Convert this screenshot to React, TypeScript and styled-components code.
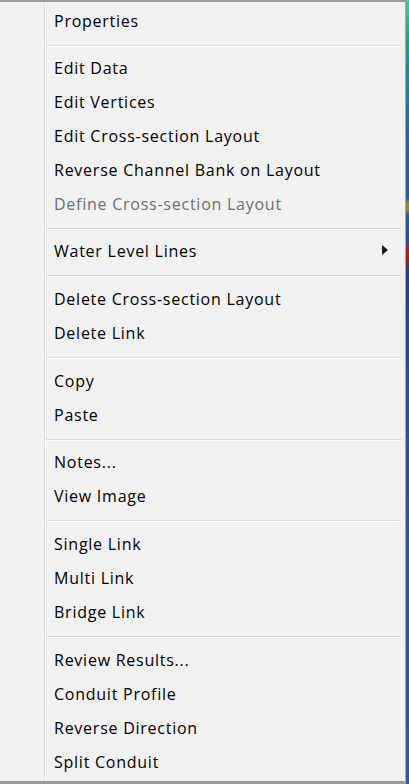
import React from "react";
import styled, { createGlobalStyle } from "styled-components";

const Global = createGlobalStyle`
  html, body { margin: 0; padding: 0; background: #f1f1f1; }
  body { font-family: "Open Sans", "Noto Sans", sans-serif; }
`;

const Screen = styled.div`
  display: flex;
  width: 409px;
  height: 784px;
  overflow: hidden;
`;

const Menu = styled.div`
  box-sizing: border-box;
  width: 406px;
  height: 784px;
  background: #f1f1f1;
  border-top: 2px solid #9a9a9a;
  border-right: 1px solid #a7a7a7;
  border-bottom: 3px solid #9a9a9a;
  padding-top: 1px;
  display: flex;
  flex-direction: column;
  position: relative;
`;

const Gutter = styled.div`
  position: absolute;
  top: 0;
  bottom: 0;
  left: 44px;
  width: 1px;
  background: #dedede;
  border-right: 1px solid #ffffff;
`;

const Strip = styled.div`
  flex: 1;
  background: linear-gradient(
    to bottom,
    #3fcf8f 0px,
    #23a07e 40px,
    #1f7f99 90px,
    #2a5d9f 150px,
    #2b5a9c 198px,
    #8a8a3a 203px,
    #8a8a3a 210px,
    #2b5a9c 215px,
    #2b4f94 240px,
    #b02020 250px,
    #a02020 258px,
    #2a3f80 270px,
    #2d4f96 400px,
    #2d5a9e 784px
  );
`;

const Item = styled.div<{ $disabled?: boolean }>`
  box-sizing: border-box;
  height: 34px;
  display: flex;
  align-items: center;
  padding: 2px 17px 0 54px;
  font-size: 16px;
  letter-spacing: 0.75px;
  color: ${(p) => (p.$disabled ? "#6f6f6f" : "#000000")};
  white-space: nowrap;
`;

const Arrow = styled.span`
  margin-left: auto;
  width: 0;
  height: 0;
  border-top: 5px solid transparent;
  border-bottom: 5px solid transparent;
  border-left: 6px solid #1a1a1a;
  margin-top: -2px;
`;

const Separator = styled.div<{ $h: number }>`
  box-sizing: border-box;
  height: ${(p) => p.$h}px;
  display: flex;
  align-items: flex-start;
  padding: 8px 3px 0 46px;
  &::after {
    content: "";
    display: block;
    flex: 1;
    height: 1px;
    background: #dcdcdc;
    border-bottom: 1px solid #ffffff;
  }
`;

type Entry =
  | { kind: "item"; label: string; disabled?: boolean; sub?: boolean }
  | { kind: "sep"; h: number };

const entries: Entry[] = [
  { kind: "item", label: "Properties" },
  { kind: "sep", h: 13 },
  { kind: "item", label: "Edit Data" },
  { kind: "item", label: "Edit Vertices" },
  { kind: "item", label: "Edit Cross-section Layout" },
  { kind: "item", label: "Reverse Channel Bank on Layout" },
  { kind: "item", label: "Define Cross-section Layout", disabled: true },
  { kind: "sep", h: 13 },
  { kind: "item", label: "Water Level Lines", sub: true },
  { kind: "sep", h: 14 },
  { kind: "item", label: "Delete Cross-section Layout" },
  { kind: "item", label: "Delete Link" },
  { kind: "sep", h: 14 },
  { kind: "item", label: "Copy" },
  { kind: "item", label: "Paste" },
  { kind: "sep", h: 13 },
  { kind: "item", label: "Notes..." },
  { kind: "item", label: "View Image" },
  { kind: "sep", h: 14 },
  { kind: "item", label: "Single Link" },
  { kind: "item", label: "Multi Link" },
  { kind: "item", label: "Bridge Link" },
  { kind: "sep", h: 14 },
  { kind: "item", label: "Review Results..." },
  { kind: "item", label: "Conduit Profile" },
  { kind: "item", label: "Reverse Direction" },
  { kind: "item", label: "Split Conduit" },
];

export default function App() {
  return (
    <>
      <Global />
      <Screen>
        <Menu>
          <Gutter />
          {entries.map((e, i) =>
            e.kind === "sep" ? (
              <Separator key={i} $h={e.h} />
            ) : (
              <Item key={i} $disabled={e.disabled}>
                {e.label}
                {e.sub && <Arrow />}
              </Item>
            )
          )}
        </Menu>
        <Strip />
      </Screen>
    </>
  );
}
